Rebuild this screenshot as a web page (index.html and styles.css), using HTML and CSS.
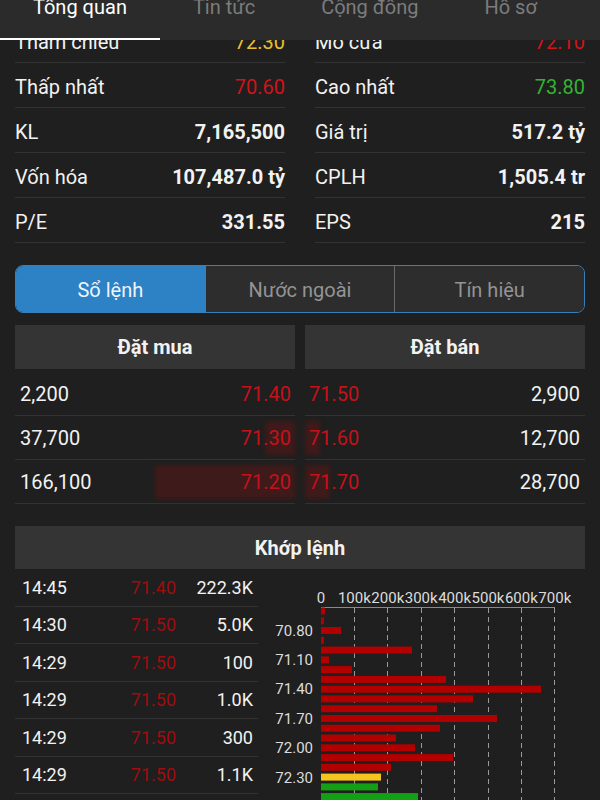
FILE: index.html
```html
<html>
<head>
    <meta charset="utf-8">
    <link rel="stylesheet" href="styles.css">
</head>
<body>
    <div class="tabs">
        <div class="tab active">Tổng quan</div>
        <div class="tab">Tin tức</div>
        <div class="tab">Cộng đồng</div>
        <div class="tab">Hồ sơ</div>
    </div>

    <div class="content">
        <div class="stats">
            <div class="stat"><span>Tham chiếu</span><span class="val ref">72.30</span></div>
            <div class="stat"><span>Mở cửa</span><span class="val down">72.10</span></div>
            <div class="stat"><span>Thấp nhất</span><span class="val down">70.60</span></div>
            <div class="stat"><span>Cao nhất</span><span class="val up">73.80</span></div>
            <div class="stat"><span>KL</span><span class="val">7,165,500</span></div>
            <div class="stat"><span>Giá trị</span><span class="val">517.2 tỷ</span></div>
            <div class="stat"><span>Vốn hóa</span><span class="val">107,487.0 tỷ</span></div>
            <div class="stat"><span>CPLH</span><span class="val">1,505.4 tr</span></div>
            <div class="stat"><span>P/E</span><span class="val">331.55</span></div>
            <div class="stat"><span>EPS</span><span class="val">215</span></div>
        </div>

        <div class="segment">
            <div class="seg active">Sổ lệnh</div>
            <div class="seg">Nước ngoài</div>
            <div class="seg">Tín hiệu</div>
        </div>

        <div class="book">
            <div class="side bid">
                <div class="head">Đặt mua</div>
                <div class="rows">
                    <div class="book-row"><span>2,200</span><span class="price">71.40</span></div>
                    <div class="book-row"><span class="depth" style="width: 30px"></span><span>37,700</span><span class="price">71.30</span></div>
                    <div class="book-row"><span class="depth" style="width: 140px"></span><span>166,100</span><span class="price">71.20</span></div>
                </div>
            </div>
            <div class="side ask">
                <div class="head">Đặt bán</div>
                <div class="rows">
                    <div class="book-row"><span class="price">71.50</span><span>2,900</span></div>
                    <div class="book-row"><span class="depth" style="width: 15px"></span><span class="price">71.60</span><span>12,700</span></div>
                    <div class="book-row"><span class="depth" style="width: 25px"></span><span class="price">71.70</span><span>28,700</span></div>
                </div>
            </div>
        </div>

        <div class="head match-head">Khớp lệnh</div>
        <div class="match">
            <div class="trades">
                <div class="trade"><span>14:45</span><span class="tprice">71.40</span><span class="vol">222.3K</span></div>
                <div class="trade"><span>14:30</span><span class="tprice">71.50</span><span class="vol">5.0K</span></div>
                <div class="trade"><span>14:29</span><span class="tprice">71.50</span><span class="vol">100</span></div>
                <div class="trade"><span>14:29</span><span class="tprice">71.50</span><span class="vol">1.0K</span></div>
                <div class="trade"><span>14:29</span><span class="tprice">71.50</span><span class="vol">300</span></div>
                <div class="trade"><span>14:29</span><span class="tprice">71.50</span><span class="vol">1.1K</span></div>
            </div>

            <svg class="chart" width="327" height="240" viewBox="0 0 327 240">
                <g class="axis-x">
                    <text x="63" y="34">0</text>
                    <text x="96.4" y="34">100k</text>
                    <text x="129.8" y="34">200k</text>
                    <text x="163.2" y="34">300k</text>
                    <text x="196.6" y="34">400k</text>
                    <text x="230" y="34">500k</text>
                    <text x="263.4" y="34">600k</text>
                    <text x="296.8" y="34">700k</text>
                </g>
                <line x1="63" y1="38.5" x2="297" y2="38.5" stroke="#8a8a8a" stroke-width="1"/>
                <g class="grid">
                    <line x1="96.5" y1="39" x2="96.5" y2="240"/>
                    <line x1="129.5" y1="39" x2="129.5" y2="240"/>
                    <line x1="163.5" y1="39" x2="163.5" y2="240"/>
                    <line x1="196.5" y1="39" x2="196.5" y2="240"/>
                    <line x1="230.5" y1="39" x2="230.5" y2="240"/>
                    <line x1="263.5" y1="39" x2="263.5" y2="240"/>
                    <line x1="296.5" y1="39" x2="296.5" y2="240"/>
                </g>
                <g class="bars">
                    <rect x="63" y="38.5" width="4" height="7"/>
                    <rect x="63" y="48.3" width="3" height="7"/>
                    <rect x="63" y="58" width="20" height="7"/>
                    <rect x="63" y="67.8" width="3" height="7"/>
                    <rect x="63" y="77.6" width="91" height="7"/>
                    <rect x="63" y="87.4" width="8" height="7"/>
                    <rect x="63" y="97.1" width="31" height="7"/>
                    <rect x="63" y="106.9" width="125" height="7"/>
                    <rect x="63" y="116.7" width="220" height="7"/>
                    <rect x="63" y="126.4" width="152" height="7"/>
                    <rect x="63" y="136.2" width="116" height="7"/>
                    <rect x="63" y="146" width="176" height="7"/>
                    <rect x="63" y="155.7" width="119" height="7"/>
                    <rect x="63" y="165.5" width="75" height="7"/>
                    <rect x="63" y="175.3" width="94" height="7"/>
                    <rect x="63" y="185.1" width="132" height="7"/>
                    <rect x="63" y="194.8" width="70" height="7"/>
                    <rect class="ref" x="63" y="204.6" width="60" height="7"/>
                    <rect class="up" x="63" y="214.4" width="57" height="7"/>
                    <rect class="up" x="63" y="224.1" width="97" height="7"/>
                </g>
                <g class="axis-y">
                    <text x="55" y="67">70.80</text>
                    <text x="55" y="96">71.10</text>
                    <text x="55" y="125">71.40</text>
                    <text x="55" y="155">71.70</text>
                    <text x="55" y="184">72.00</text>
                    <text x="55" y="214">72.30</text>
                </g>
            </svg>
        </div>
    </div>
</body>
</html>
```

FILE: styles.css
```css
body {
    margin: 0;
    background-color: #1f1f1f;
    font-family: Roboto, "Noto Sans", sans-serif;
    color: #f2f2f2;
    overflow: hidden;
}
.tabs {
    position: absolute;
    top: 0;
    left: 0;
    right: 0;
    height: 40px;
    display: flex;
    background-color: #2b2b2b;
    z-index: 2;
}
.tab {
    height: 40px;
    box-sizing: border-box;
    padding: 0 33px;
    font-size: 20px;
    line-height: 14px;
    color: #7c7c7c;
}
.tab.active {
    color: #fff;
    border-bottom: 2px solid #fff;
}
.content {
    padding: 18px 15px 0;
}
.stats {
    display: grid;
    grid-template-columns: 1fr 1fr;
    column-gap: 30px;
}
.stat {
    height: 41px;
    padding-top: 3px;
    border-bottom: 1px solid #333;
    display: flex;
    justify-content: space-between;
    align-items: center;
    font-size: 20px;
}
.val {
    font-weight: bold;
}
.val.ref {
    color: #e8c12a;
    font-weight: normal;
}
.val.down {
    color: #d0141a;
    font-weight: normal;
}
.val.up {
    color: #34b334;
    font-weight: normal;
}
.segment {
    margin-top: 22px;
    height: 48px;
    display: flex;
    border: 1px solid #3a7fb5;
    border-radius: 8px;
    overflow: hidden;
    box-sizing: border-box;
}
.seg {
    flex: 1;
    display: flex;
    justify-content: center;
    align-items: center;
    padding-top: 2px;
    font-size: 20px;
    color: #949494;
    background-color: #2d2d2d;
    border-left: 1px solid #6a6a6a;
}
.seg.active {
    background-color: #2c82c4;
    color: #eef5fb;
    border-left: none;
}
.seg.active + .seg {
    border-left: 1px solid #3a7fb5;
}
.book {
    margin-top: 12px;
    display: grid;
    grid-template-columns: 1fr 1fr;
    column-gap: 10px;
}
.head {
    height: 44px;
    display: flex;
    justify-content: center;
    align-items: center;
    background-color: #343434;
    font-size: 20px;
    font-weight: bold;
}
.rows {
    padding-top: 3px;
}
.book-row {
    position: relative;
    height: 43px;
    border-bottom: 1px solid #333;
    display: flex;
    justify-content: space-between;
    align-items: center;
    padding: 0 4px 0 5px;
    font-size: 20px;
}
.ask .book-row {
    padding: 0 5px 0 4px;
}
.book-row span {
    position: relative;
}
.book-row .depth {
    position: absolute;
    top: 5px;
    bottom: 4px;
    right: 0;
    background-color: #3f1a1a;
    filter: blur(2px);
}
.ask .book-row .depth {
    left: 0;
    right: auto;
}
.price {
    color: #c4121a;
}
.match-head {
    margin-top: 22px;
    height: 43px;
}
.match {
    display: flex;
}
.trades {
    width: 243px;
}
.trade {
    height: 36.5px;
    border-bottom: 1px solid #333;
    display: grid;
    grid-template-columns: 90px 64px 77px;
    align-items: center;
    padding: 0 5px 0 7px;
    font-size: 18px;
}
.tprice {
    text-align: right;
    color: #9c0e10;
}
.vol {
    text-align: right;
}
.chart {
    display: block;
    font-family: Roboto, "Noto Sans", sans-serif;
    font-size: 15px;
}
.chart text {
    fill: #dcdcdc;
}
.axis-x text {
    text-anchor: middle;
}
.axis-y text {
    text-anchor: end;
}
.grid line {
    stroke: #9a9a9a;
    stroke-width: 1;
    stroke-dasharray: 5 4;
}
.bars rect {
    fill: #b20000;
}
.bars rect.ref {
    fill: #f5c51e;
}
.bars rect.up {
    fill: #14a014;
}
```
